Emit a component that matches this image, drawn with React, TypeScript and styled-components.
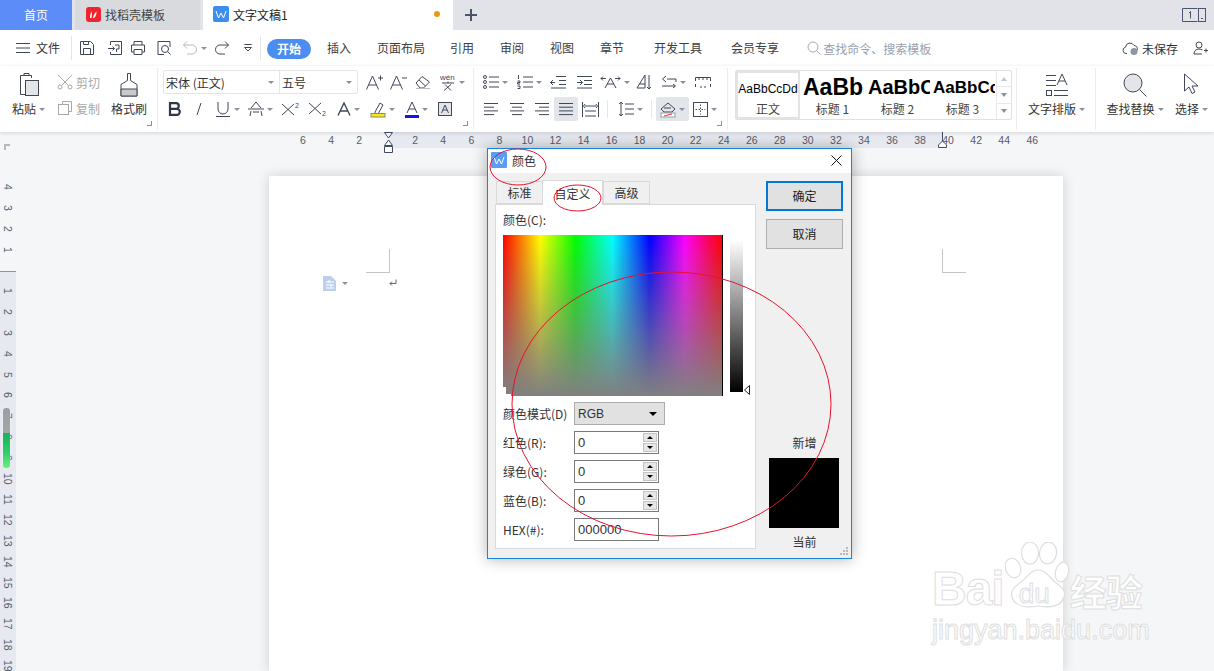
import * as React from 'react';
import styled, { createGlobalStyle } from 'styled-components';

const GlobalStyle = createGlobalStyle`
  html, body { margin: 0; padding: 0; height: 671px; overflow: hidden; background: #f5f6f8; }
  body { font-family: "Noto Sans CJK SC", "Liberation Sans", sans-serif; font-size: 12px; color: #333; }
  * { box-sizing: border-box; }
`;

const Page = styled.div`
  position: relative;
  width: 1214px;
  height: 671px;
  overflow: hidden;
  display: flex;
  flex-direction: column;
`;

/* tab strip */
const TabBar = styled.div`
  height: 30px;
  flex: none;
  background: #e1e3e8;
  display: flex;
  align-items: stretch;
`;
const HomeTab = styled.div`
  width: 72px;
  padding-bottom: 2px;
  background: #5b8cf8;
  color: #fff;
  display: flex;
  align-items: center;
  justify-content: center;
`;
const DocTab = styled.div<{ $w: number; $active?: boolean }>`
  width: ${p => p.$w}px;
  margin-left: 3px;
  padding-left: ${p => (p.$active ? 10 : 11)}px;
  padding-bottom: 2px;
  background: ${p => (p.$active ? '#fff' : '#d9dade')};
  color: ${p => (p.$active ? '#222' : '#444')};
  display: flex;
  align-items: center;
  gap: 4px;
`;
const UnsavedDot = styled.span`
  width: 6px;
  height: 6px;
  border-radius: 50%;
  background: #e89b0c;
  margin-left: auto;
  margin-right: 13px;
`;
const PlusTab = styled.div`
  margin-left: 11px;
  display: flex;
  align-items: center;
`;
const PageCount = styled.div`
  margin-left: auto;
  margin-right: 8px;
  display: flex;
  align-items: center;
`;

/* menu row */
const MenuBar = styled.div`
  height: 36px;
  flex: none;
  background: #fff;
  display: flex;
  align-items: center;
  position: relative;
`;
const FileMenu = styled.div`
  width: 71px;
  padding: 0 0 1px 16px;
  display: flex;
  align-items: center;
  gap: 6px;
  color: #333;
`;
const VRule = styled.div`
  width: 1px;
  height: 24px;
  background: #e4e5e8;
  flex: none;
`;
const QuickBtn = styled.div<{ $w: number }>`
  width: ${p => p.$w}px;
  display: flex;
  align-items: center;
  justify-content: center;
  gap: 3px;
`;
const StartPill = styled.div`
  width: 44px;
  height: 20px;
  margin: 2px 0 0 6px;
  padding-bottom: 1px;
  border-radius: 10px;
  background: #4b8df0;
  color: #fff;
  font-weight: 700;
  display: flex;
  align-items: center;
  justify-content: center;
`;
const MenuItem = styled.div<{ $gap: number }>`
  margin-left: ${p => p.$gap}px;
  padding-bottom: 1px;
  color: #3c3c3c;
  white-space: nowrap;
`;
const SearchHint = styled.div`
  margin-left: 28px;
  display: flex;
  align-items: center;
  gap: 2px;
  color: #99a0ac;
`;
const SaveState = styled.div`
  margin-left: auto;
  margin-right: 6px;
  display: flex;
  align-items: center;
  gap: 3px;
  color: #333;
`;
const SaveGap = styled.span`
  width: 9px;
`;

/* ribbon */
const Ribbon = styled.div`
  height: 66px;
  flex: none;
  background: #fff;
  display: flex;
  box-shadow: 0 1px 4px rgba(0, 0, 0, 0.14);
  position: relative;
  z-index: 2;
`;
const Group = styled.div<{ $w: number; $pad?: number; $line?: boolean }>`
  position: relative;
  width: ${p => p.$w}px;
  height: 62px;
  margin-top: 2px;
  padding-left: ${p => p.$pad || 0}px;
  border-right: ${p => (p.$line === false ? 'none' : '1px solid #ecedf0')};
  flex: none;
  display: flex;
`;
const Launcher = styled.span`
  position: absolute;
  right: 5px;
  bottom: 4px;
  width: 5px;
  height: 5px;
  border-right: 1px solid #8a8f99;
  border-bottom: 1px solid #8a8f99;
`;
const BigTool = styled.div<{ $w: number }>`
  width: ${p => p.$w}px;
  padding-top: 4px;
  display: flex;
  flex-direction: column;
  align-items: center;
  flex: none;
`;
const BigIcon = styled.div`
  height: 26px;
  display: flex;
  align-items: center;
  justify-content: center;
`;
const BigLabel = styled.div`
  margin-top: 2px;
  height: 18px;
  line-height: 18px;
  display: flex;
  align-items: center;
  gap: 3px;
  white-space: nowrap;
  color: #333;
`;
const SmallCol = styled.div`
  width: 53px;
  flex: none;
  padding-top: 5px;
  display: flex;
  flex-direction: column;
  gap: 8px;
`;
const SmallTool = styled.div`
  height: 18px;
  display: flex;
  align-items: center;
  gap: 3px;
  color: #a8a8a8;
`;
const Rows = styled.div`
  display: flex;
  flex-direction: column;
  padding-top: 2px;
  gap: 3px;
`;
const ToolRow = styled.div`
  display: flex;
  align-items: center;
  height: 24px;
`;
const Tool = styled.div<{ $w: number; $on?: boolean }>`
  width: ${p => p.$w}px;
  height: 24px;
  flex: none;
  border-radius: 2px;
  background: ${p => (p.$on ? '#e2e5e9' : 'transparent')};
  display: flex;
  align-items: center;
  justify-content: center;
  gap: 3px;
`;
const Caret = styled.span`
  width: 0;
  height: 0;
  flex: none;
  border-left: 3px solid transparent;
  border-right: 3px solid transparent;
  border-top: 3px solid #8b909a;
`;
const FontBox = styled.div`
  display: flex;
  height: 24px;
  width: 195px;
  margin-right: 4px;
  border: 1px solid #e3e4e7;
  border-radius: 2px;
  flex: none;
`;
const FontField = styled.div<{ $w: number }>`
  width: ${p => p.$w}px;
  padding: 0 5px 0 2px;
  display: flex;
  align-items: center;
  justify-content: space-between;
  color: #333;
  & + & { border-left: 1px solid #e3e4e7; }
`;
const RowRule = styled.div`
  width: 1px;
  height: 18px;
  margin: 0 4px;
  background: #e6e7ea;
  flex: none;
`;
const Gallery = styled.div`
  margin: 2px 0 0 7px;
  width: 277px;
  height: 50px;
  border: 1px solid #e0e1e4;
  border-radius: 2px;
  display: flex;
`;
const StyleCell = styled.div<{ $w: number; $on?: boolean }>`
  width: ${p => p.$w}px;
  height: ${p => (p.$on ? '48px' : '100%')};
  flex: none;
  overflow: hidden;
  border: ${p => (p.$on ? '2px solid #e3e3e6' : 'none')};
  display: flex;
  flex-direction: column;
  align-items: ${p => (p.$on ? 'center' : 'flex-start')};
`;
const StyleSample = styled.div<{ $size: number; $bold?: boolean }>`
  height: 30px;
  padding: 3px 0 0 ${p => (p.$bold ? 3 : 0)}px;
  display: flex;
  align-items: center;
  font-family: "Liberation Sans", sans-serif;
  font-size: ${p => p.$size}px;
  font-weight: ${p => (p.$bold ? 700 : 400)};
  color: #000;
  white-space: nowrap;
`;
const StyleName = styled.div`
  align-self: center;
  height: 16px;
  line-height: 16px;
  color: #444;
  white-space: nowrap;
`;
const GalleryScroll = styled.div`
  margin-left: auto;
  width: 15px;
  border-left: 1px solid #e8e9ec;
  display: flex;
  flex-direction: column;
`;
const ScrollStep = styled.div`
  flex: 1;
  display: flex;
  align-items: center;
  justify-content: center;
  & + & { border-top: 1px solid #e8e9ec; }
`;
const Up = styled.span`
  border-left: 3px solid transparent;
  border-right: 3px solid transparent;
  border-bottom: 4px solid #c3c6cc;
`;
const Down = styled.span`
  border-left: 3px solid transparent;
  border-right: 3px solid transparent;
  border-top: 4px solid #8b909a;
`;

/* rulers + document */
const TopRuler = styled.div`
  height: 16px;
  flex: none;
  padding-left: 289px;
  display: flex;
  position: relative;
  background: linear-gradient(to right, transparent 388px, #e6e9ef 388px, #e6e9ef 943px, transparent 943px);
`;
const RulerNum = styled.div`
  width: 28.05px;
  flex: none;
  text-align: center;
  font-family: "Liberation Sans", sans-serif;
  font-size: 10.5px;
  line-height: 16px;
  color: #555c6b;
`;
const Marker = styled.svg<{ $x: number }>`
  position: absolute;
  left: ${p => p.$x}px;
  top: 0;
`;
const TabStop = styled.span`
  position: absolute;
  left: 4px;
  top: 12px;
  width: 6px;
  height: 6px;
  border-left: 2px solid #b4b8c0;
  border-top: 2px solid #b4b8c0;
`;
const Workspace = styled.div`
  flex: 1;
  display: flex;
  min-height: 0;
  background: #f5f6f8;
`;
const SideRuler = styled.div`
  width: 16px;
  flex: none;
  padding-top: 29px;
  display: flex;
  flex-direction: column;
  background: linear-gradient(to bottom, transparent 123px, #8c93a3 123px, #8c93a3 124px, #e6e9ef 124px);
`;
const SideNum = styled.div`
  height: 20.8px;
  flex: none;
  display: flex;
  align-items: center;
  justify-content: center;
  writing-mode: vertical-rl;
  font-family: "Liberation Sans", sans-serif;
  font-size: 10.5px;
  color: #555c6b;
`;
const Paper = styled.div`
  width: 794px;
  margin: 28px 0 0 253px;
  padding-top: 73px;
  flex: none;
  background: #fff;
  box-shadow: 0 0 12px rgba(0, 0, 0, 0.16);
`;
const CropRow = styled.div`
  display: flex;
  justify-content: space-between;
  padding: 0 97px;
`;
const CropMark = styled.div<{ $side: 'left' | 'right' }>`
  width: 24px;
  height: 24px;
  border-bottom: 1px solid #c4c4c4;
  border-${p => p.$side}: 1px solid #c4c4c4;
`;
const ParaRow = styled.div`
  margin-top: 1px;
  padding-left: 54px;
  height: 18px;
  display: flex;
  align-items: center;
  gap: 5px;
`;
const ParaMark = styled.span`
  margin-left: 36px;
  display: flex;
`;

/* color dialog */
const Dialog = styled.div`
  position: absolute;
  left: 487px;
  top: 148px;
  width: 365px;
  height: 411px;
  background: #f0f0f0;
  border: 1px solid #1883d7;
  box-shadow: 0 0 14px rgba(0, 0, 0, 0.3);
  display: flex;
  flex-direction: column;
  z-index: 5;
`;
const TitleBar = styled.div`
  height: 24px;
  flex: none;
  background: #fff;
  padding: 0 9px 2px 3px;
  display: flex;
  align-items: center;
  gap: 5px;
  color: #333;
`;
const CloseBtn = styled.div`
  margin-left: auto;
  display: flex;
`;
const DialogBody = styled.div`
  flex: 1;
  padding: 6px 8px 8px 7px;
  display: flex;
`;
const LeftCol = styled.div`
  width: 261px;
  flex: none;
  display: flex;
  flex-direction: column;
`;
const TabStrip = styled.div`
  height: 25px;
  flex: none;
  display: flex;
  align-items: flex-end;
  padding-left: 1px;
  position: relative;
  z-index: 1;
`;
const DlgTab = styled.div<{ $w: number; $on?: boolean }>`
  width: ${p => p.$w}px;
  height: ${p => (p.$on ? 25 : 23)}px;
  margin-bottom: ${p => (p.$on ? -1 : 0)}px;
  background: ${p => (p.$on ? '#fff' : '#f0f0f0')};
  border: 1px solid #d9d9d9;
  border-bottom: ${p => (p.$on ? 'none' : '1px solid #d9d9d9')};
  margin-right: ${p => (p.$on ? 0 : -1)}px;
  display: flex;
  align-items: center;
  justify-content: center;
  color: #333;
`;
const Pane = styled.div`
  width: 261px;
  height: 345px;
  background: #fff;
  border: 1px solid #d9d9d9;
  padding: 7px 7px 0;
`;
const PaneLabel = styled.div`
  height: 16px;
  line-height: 16px;
`;
const PickerRow = styled.div`
  margin-top: 7px;
  height: 161px;
  display: flex;
`;
const Spectrum = styled.div`
  position: relative;
  width: 220px;
  height: 161px;
  flex: none;
  border-right: 1px solid #000;
  background:
    linear-gradient(to bottom, rgba(128, 128, 128, 0), rgb(128, 128, 128)),
    linear-gradient(to right, #f00, #ff0 17%, #0f0 33%, #0ff 50%, #00f 67%, #f0f 83%, #f00);
`;
const SpectrumCursor = styled.span`
  position: absolute;
  left: 0;
  bottom: 0;
  width: 8px;
  height: 9px;
  background: linear-gradient(to right, #fff 3px, transparent 3px), linear-gradient(to top, #fff 2px, transparent 2px);
`;
const LumaBar = styled.div`
  margin: 5px 0 0 7px;
  width: 13px;
  height: 152px;
  flex: none;
  background: linear-gradient(to bottom, #fff, #000);
`;
const LumaArrow = styled.svg`
  margin-top: 150px;
  margin-left: 1px;
  flex: none;
`;
const FormGrid = styled.div`
  margin-top: 6px;
  display: grid;
  grid-template-columns: 71px 1fr;
  grid-auto-rows: 23px;
  row-gap: 6px;
  align-items: center;
`;
const ModeSelect = styled.div`
  width: 91px;
  height: 23px;
  background: #e1e1e1;
  border: 1px solid #adadad;
  padding: 0 7px 0 3px;
  display: flex;
  align-items: center;
  justify-content: space-between;
  font-family: "Liberation Sans", sans-serif;
`;
const BlackCaret = styled.span`
  border-left: 4px solid transparent;
  border-right: 4px solid transparent;
  border-top: 4px solid #000;
`;
const NumField = styled.div<{ $w: number }>`
  width: ${p => p.$w}px;
  height: 23px;
  background: #fff;
  border: 1px solid #7a7a7a;
  padding: 1px 1px 1px 3px;
  display: flex;
  align-items: center;
  justify-content: space-between;
  font-family: "Liberation Sans", sans-serif;
  font-size: 13px;
`;
const Spinner = styled.div`
  width: 14px;
  height: 19px;
  display: flex;
  flex-direction: column;
  gap: 1px;
`;
const SpinPart = styled.div`
  flex: 1;
  background: #e6e6e6;
  border: 1px solid #c4c4c4;
  display: flex;
  align-items: center;
  justify-content: center;
`;
const SpinUp = styled.span`
  border-left: 3px solid transparent;
  border-right: 3px solid transparent;
  border-bottom: 3px solid #000;
`;
const SpinDown = styled.span`
  border-left: 3px solid transparent;
  border-right: 3px solid transparent;
  border-top: 3px solid #000;
`;
const RightCol = styled.div`
  width: 77px;
  margin: 2px 0 0 10px;
  flex: none;
  display: flex;
  flex-direction: column;
  align-items: center;
`;
const DlgButton = styled.div<{ $primary?: boolean }>`
  width: 77px;
  height: 30px;
  flex: none;
  padding-bottom: 2px;
  background: #e1e1e1;
  border: ${p => (p.$primary ? '2px solid #0078d7' : '1px solid #adadad')};
  display: flex;
  align-items: center;
  justify-content: center;
  margin-bottom: 8px;
  color: #222;
`;
const SwatchLabel = styled.div<{ $top?: boolean }>`
  height: 16px;
  line-height: 16px;
  margin-top: ${p => (p.$top ? 'auto' : '6px')};
  margin-bottom: ${p => (p.$top ? '7px' : '0')};
`;
const Swatch = styled.div`
  width: 70px;
  height: 70px;
  margin-right: 1px;
  background: #000;
`;
const Grip = styled.svg`
  position: absolute;
  right: 2px;
  bottom: 2px;
`;

/* overlays */
const Scribbles = styled.svg`
  position: absolute;
  left: 0;
  top: 0;
  z-index: 6;
  pointer-events: none;
`;
const ScrollThumb = styled.div`
  position: absolute;
  left: 3px;
  top: 408px;
  width: 7px;
  height: 60px;
  border-radius: 3px;
  box-shadow: 0 0 2px rgba(255, 255, 255, 0.9);
  background: linear-gradient(to bottom, #9c9ea3 0, #a4a6aa 25px, #17b35c 25px, #2fcf6c 45px, #6df07f 60px);
`;
const Watermark = styled.div`
  position: absolute;
  left: 932px;
  top: 542px;
  width: 220px;
  z-index: 3;
  pointer-events: none;
  display: flex;
  flex-direction: column;
`;
const BrandRow = styled.div`
  display: flex;
  align-items: flex-end;
  height: 68px;
`;
const OutlineText = styled.span<{ $size: number; $bold?: boolean; $tight?: boolean }>`
  font-family: "Liberation Sans", "Noto Sans CJK SC", sans-serif;
  font-size: ${p => p.$size}px;
  font-weight: ${p => (p.$bold ? 700 : 400)};
  line-height: ${p => (p.$tight ? 0.85 : 1)};
  letter-spacing: ${p => (p.$tight ? -1 : 0)}px;
  color: #fff;
  -webkit-text-stroke: 1px #dedede;
  white-space: nowrap;
`;
const PawBox = styled.div`
  position: relative;
  width: 65px;
  height: 68px;
  margin-left: 1px;
  flex: none;
`;
const PawText = styled.div`
  position: absolute;
  left: 14px;
  top: 38px;
`;
const SiteLine = styled.div`
  margin-top: 7px;
`;

const stroke = '#404756';

const Svg = ({ w = 16, h = 16, c = stroke, sw = 1, children }: { w?: number; h?: number; c?: string; sw?: number; children: React.ReactNode }) => (
  <svg width={w} height={h} viewBox={`0 0 ${w} ${h}`} fill="none" stroke={c} strokeWidth={sw} style={{ flex: 'none', display: 'block' }}>
    {children}
  </svg>
);

const rulerNums = ['6', '4', '2', '', '2', '4', '6', '8', '10', '12', '14', '16', '18', '20', '22', '24', '26', '28', '30', '32', '34', '36', '38', '40', '42', '44', '46'];
const sideTop = ['4', '3', '2', '1', ''];
const sideBottom = ['1', '2', '3', '4', '5', '6', '7', '8', '9', '10', '11', '12', '13', '14', '15', '16', '17', '18', '19'];

const Lines = ({ rows }: { rows: [number, number][] }) => (
  <Svg w={16} h={16}>
    {rows.map(([a, b], i) => (
      <path key={i} d={`M${a} ${2.5 + i * 3.7}H${b}`} />
    ))}
  </Svg>
);

const SpinField = ({ value }: { value: string }) => (
  <NumField $w={85}>
    {value}
    <Spinner>
      <SpinPart><SpinUp /></SpinPart>
      <SpinPart><SpinDown /></SpinPart>
    </Spinner>
  </NumField>
);

export default function App() {
  return (
    <Page>
      <GlobalStyle />
      <TabBar>
        <HomeTab>首页</HomeTab>
        <DocTab $w={125}>
          <svg width="15" height="15" viewBox="0 0 15 15" style={{ flex: 'none' }}>
            <rect width="15" height="15" rx="3" fill="#f0242f" />
            <path d="M4 11c0-3 .5-5 1.500-6.500C6 7 6 9 5.500 11zM7 11.500c0-3 1.500-5 3.500-7C10.500 8 9.500 10.500 7 11.500z" fill="#fff" />
          </svg>
          找稻壳模板
        </DocTab>
        <DocTab $w={250} $active>
          <svg width="16" height="16" viewBox="0 0 16 16" style={{ flex: 'none' }}>
            <rect width="16" height="16" rx="2" fill="#3d8cf0" />
            <path d="M3 5l2.500 7L8 7l2.500 5L13 5" fill="none" stroke="#fff" strokeWidth="1" />
          </svg>
          文字文稿1
          <UnsavedDot />
        </DocTab>
        <PlusTab>
          <Svg w={14} h={14} c="#4a5568" sw={2}><path d="M7 1v12M1 7h12" /></Svg>
        </PlusTab>
        <PageCount>
          <svg width="24" height="14" viewBox="0 0 24 14" fill="none" stroke="#4a5570">
            <path d="M15.500 .5H.5v13h15" />
            <rect x="16.500" y=".5" width="7" height="13" />
            <path d="M8.500 3.500v7M7 5l1.500-1.500M19 10.500h2" />
          </svg>
        </PageCount>
      </TabBar>

      <MenuBar>
        <FileMenu>
          <Svg w={14} h={12}><path d="M0 1.500h14M0 6h14M0 10.500h14" /></Svg>
          文件
        </FileMenu>
        <VRule />
        <QuickBtn $w={30}>
          <Svg><path d="M1.500 1.500h10l3 3v10h-13zM4.500 14.500v-6h7v6M4.500 1.500v3h5v-3" /></Svg>
        </QuickBtn>
        <QuickBtn $w={26}>
          <Svg><path d="M3.500 5V1.500h11v13h-11V12M1 8.500h6.500M5.500 6.500l2 2-2 2M8 5h4v4H9.500v3" /></Svg>
        </QuickBtn>
        <QuickBtn $w={20}>
          <Svg><path d="M4 5V1.500h8V5M4 12H1.500V5h13v7H12M4 9.500h8v5H4z" /></Svg>
        </QuickBtn>
        <QuickBtn $w={32}>
          <Svg><path d="M14 7V1.500H2v13h6" /><circle cx="9" cy="9" r="3.500" /><path d="M11.500 11.500l3 3" /></Svg>
        </QuickBtn>
        <QuickBtn $w={28}>
          <Svg c="#b5b8be"><path d="M5 1.500L1.500 5 5 8.500M1.500 5H10a4 4 0 010 9H5" /></Svg>
          <Caret />
        </QuickBtn>
        <QuickBtn $w={28}>
          <Svg><path d="M11 1.500L14.500 5 11 8.500M14.500 5H6a4 4 0 000 9h5" /></Svg>
        </QuickBtn>
        <QuickBtn $w={24}>
          <Svg w={10} h={10}><path d="M1.500 1.500h7M1.500 4.500l3.500 3.500 3.500-3.500z" /></Svg>
        </QuickBtn>
        <VRule />
        <StartPill>开始</StartPill>
        <MenuItem $gap={16}>插入</MenuItem>
        <MenuItem $gap={26}>页面布局</MenuItem>
        <MenuItem $gap={25}>引用</MenuItem>
        <MenuItem $gap={26}>审阅</MenuItem>
        <MenuItem $gap={26}>视图</MenuItem>
        <MenuItem $gap={26}>章节</MenuItem>
        <MenuItem $gap={30}>开发工具</MenuItem>
        <MenuItem $gap={29}>会员专享</MenuItem>
        <SearchHint>
          <Svg w={14} h={14} c="#a6abb5"><circle cx="6" cy="6" r="5" /><path d="M9.500 9.500l4 4" /></Svg>
          查找命令、搜索模板
        </SearchHint>
        <SaveState>
          <Svg w={17} h={14}>
            <path d="M5 12.500H4a3.200 3.200 0 01-.5-6.300A4.500 4.500 0 0112 4.500a3.500 3.500 0 013 5" />
            <circle cx="12" cy="10.500" r="3.500" fill="#8f96a3" stroke="none" />
          </Svg>
          未保存
          <SaveGap />
          <Svg w={15} h={14}><circle cx="6" cy="4" r="3" /><path d="M1 13c0-3 2-5 5-5 1.500 0 2.500.5 3.500 1M1 13h8M11 9.500h4M13 7.500v4" /></Svg>
        </SaveState>
      </MenuBar>

      <Ribbon>
        <Group $w={158}>
          <BigTool $w={57}>
            <BigIcon>
              <svg width="22" height="26" viewBox="0 0 22 26" fill="none" stroke={stroke}>
                <path d="M13.500 6V3.500h-11v19H7M6 3.500V1.500h5v2" />
                <rect x="7.500" y="8.500" width="13" height="15" fill="#e4e5e8" />
              </svg>
            </BigIcon>
            <BigLabel>粘贴<Caret /></BigLabel>
          </BigTool>
          <SmallCol>
            <SmallTool>
              <Svg c="#a8a8a8"><circle cx="3" cy="13" r="2" /><circle cx="13" cy="13" r="2" /><path d="M1 1l10.500 10.500M15 1L4.500 11.500" /></Svg>
              剪切
            </SmallTool>
            <SmallTool>
              <Svg c="#a8a8a8"><path d="M5.500 4V1.500h9v10H12" /><rect x="1.500" y="4.500" width="10" height="10" /></Svg>
              复制
            </SmallTool>
          </SmallCol>
          <BigTool $w={38}>
            <BigIcon>
              <svg width="18" height="26" viewBox="0 0 18 26" fill="none" stroke={stroke}>
                <path d="M7.500 1.500h3v7l6.500 4v11.500H1V12.500l6.500-4z" />
                <path d="M1 17h16v7H1z" fill="#c7c9cd" />
              </svg>
            </BigIcon>
            <BigLabel>格式刷</BigLabel>
          </BigTool>
          <Launcher />
        </Group>

        <Group $w={316} $pad={5}>
          <Rows>
            <ToolRow>
              <FontBox>
                <FontField $w={115}>宋体 (正文)<Caret /></FontField>
                <FontField $w={78}>五号<Caret /></FontField>
              </FontBox>
              <Tool $w={24}>
                <Svg w={17} h={16}><path d="M.5 15.500L6.500 2l6 13.500M2.500 11h8M12 4h5M14.500 1.500v5" /></Svg>
              </Tool>
              <Tool $w={24}>
                <Svg w={17} h={16}><path d="M.5 15.500L6.500 2l6 13.500M2.500 11h8M12 4h5" /></Svg>
              </Tool>
              <Tool $w={26}>
                <Svg w={16} h={14}><path d="M1 8l6-6.500L14.500 7 8.500 13H5zM4 5l6.500 6" /><path d="M1 13.500h14" stroke="#bbb" /></Svg>
              </Tool>
              <Tool $w={32}>
                <svg width="16" height="18" viewBox="0 0 16 18" fill="none" stroke={stroke}>
                  <text x="0" y="7" fontSize="8" fill={stroke} stroke="none" fontFamily="Liberation Sans">wén</text>
                  <path d="M2 10h12M8 8.500V10M5 11.500l6 6M11 11.500l-7 6" />
                </svg>
                <Caret />
              </Tool>
            </ToolRow>
            <ToolRow>
              <Tool $w={24}>
                <Svg w={14} h={14} sw={2.200} c="#2f3645"><path d="M2 1.200h6a2.800 2.800 0 010 5.600H2zM2 6.800h6.800a3 3 0 010 6H2zM2 0v14" /></Svg>
              </Tool>
              <Tool $w={24}>
                <Svg w={10} h={14}><path d="M7 1L3 13" /></Svg>
              </Tool>
              <Tool $w={32}>
                <Svg w={16} h={16}><path d="M3 1v7a5 5 0 0010 0V1M1 15.500h14" /></Svg>
                <Caret />
              </Tool>
              <Tool $w={34}>
                <Svg w={16} h={16}><path d="M3 7l5-6 5 6M0 8h16M3 10l-1 5M13 10l1 5M5 11h6" /></Svg>
                <Caret />
              </Tool>
              <Tool $w={28}>
                <Svg w={20} h={14}><path d="M1 2l12 11M13 2L1 13" /><text x="14" y="6" fontSize="7" fill={stroke} stroke="none" fontFamily="Liberation Sans">2</text></Svg>
              </Tool>
              <Tool $w={26}>
                <Svg w={20} h={14}><path d="M1 1l12 11M13 1L1 12" /><text x="14" y="14" fontSize="7" fill={stroke} stroke="none" fontFamily="Liberation Sans">2</text></Svg>
              </Tool>
              <Tool $w={34}>
                <Svg w={14} h={14} sw={1.400}><path d="M1 13.500L7 1l6 12.500M3.500 9h7" /></Svg>
                <Caret />
              </Tool>
              <Tool $w={34}>
                <svg width="16" height="17" viewBox="0 0 16 17" fill="none" stroke={stroke}>
                  <path d="M5 11l5-9 3 2-5 9H5z" />
                  <rect x="1" y="12.500" width="14" height="3.500" fill="#f8e71c" stroke="#8a8a60" />
                </svg>
                <Caret />
              </Tool>
              <Tool $w={34}>
                <svg width="14" height="17" viewBox="0 0 14 17" fill="none" stroke={stroke}>
                  <path d="M2 12L7 1l5 11M4 8h6" />
                  <rect y="14" width="14" height="3" fill="#1414e6" stroke="none" />
                </svg>
                <Caret />
              </Tool>
              <Tool $w={24}>
                <Svg w={14} h={14}><rect x=".5" y=".5" width="13" height="13" fill="#e4e5e8" /><path d="M3.500 11L7 3l3.500 8M5 8h4" /></Svg>
              </Tool>
            </ToolRow>
          </Rows>
          <Launcher />
        </Group>

        <Group $w={254} $pad={3}>
          <Rows>
            <ToolRow>
              <Tool $w={36}>
                <Svg w={16} h={14}><circle cx="2" cy="2" r="1.500" /><circle cx="2" cy="7" r="1.500" /><circle cx="2" cy="12" r="1.500" /><path d="M6 2h10M6 7h10M6 12h10" /></Svg>
                <Caret />
              </Tool>
              <Tool $w={32}>
                <Svg w={16} h={14}><path d="M1.500 0v4M.5 6h2.500v1.500H.5V9h2.500M.5 11H3v2.500H.5M6 2h10M6 7h10M6 12h10" /></Svg>
                <Caret />
              </Tool>
              <Tool $w={26}>
                <Svg w={16} h={14}><path d="M6 1.500h10M9 5.500h7M9 9.500h7M1 13h15M5 7.500H.5M3 5L.5 7.500 3 10" /></Svg>
              </Tool>
              <Tool $w={26}>
                <Svg w={16} h={14}><path d="M1 1.500h15M8 5.500h8M8 9.500h8M1 13h15M1 7.500h5.500M4 5l2.500 2.500L4 10" /></Svg>
              </Tool>
              <Tool $w={36}>
                <Svg w={21} h={14}><path d="M1 3.500h5M3 1.500L1 3.500l2 2M15 3.500h5M18 1.500l2 2-2 2M5 13l5.500-10L16 13M7 9h7" /></Svg>
                <Caret />
              </Tool>
              <Tool $w={22}>
                <Svg w={16} h={16}><path d="M1 14h8V1L1 14zM3 10h6M13 1v14M11 13l2 2 2-2" /></Svg>
              </Tool>
              <Tool $w={36}>
                <Svg w={16} h={16}><path d="M6 5h9v3M1.500 5L5 2M1.500 5L5 8M1 12h13M12 10l2.500 2L12 14" /></Svg>
                <Caret />
              </Tool>
              <Tool $w={24}>
                <Svg w={16} h={12}><path d="M.5 5V1.500h15V5M4 1.500V4M8 1.500V4M12 1.500V4M.5 8v3M15.500 8v3M5 11h2M9 11h2" /></Svg>
              </Tool>
            </ToolRow>
            <ToolRow>
              <Tool $w={27}><Lines rows={[[1, 15], [1, 11], [1, 15], [1, 11]]} /></Tool>
              <Tool $w={25}><Lines rows={[[1, 15], [3, 13], [1, 15], [3, 13]]} /></Tool>
              <Tool $w={25}><Lines rows={[[1, 15], [5, 15], [1, 15], [5, 15]]} /></Tool>
              <Tool $w={24} $on><Lines rows={[[1, 15], [1, 15], [1, 15], [1, 15]]} /></Tool>
              <Tool $w={25}>
                <Svg w={17} h={15}><path d="M.5 0v15M16.500 0v15M3 4h11M3 2l-1.500 2L3 6M14 2l1.500 2L14 6M3 9h11M3 14h11" /></Svg>
              </Tool>
              <RowRule />
              <Tool $w={35}>
                <Svg w={17} h={16}><path d="M4 1v14M2 3l2-2 2 2M2 13l2 2 2-2M8 3h9M8 8h9M8 13h9" /></Svg>
                <Caret />
              </Tool>
              <RowRule />
              <Tool $w={33} $on>
                <svg width="16" height="17" viewBox="0 0 16 17" fill="none" stroke={stroke}>
                  <path d="M1 8l7-6 7 6-3 3H4zM4 7h7" />
                  <rect x="1" y="12" width="14" height="4" fill="#fff" stroke="#9a9ea6" />
                  <path d="M4 15l8-2" stroke="#e53935" />
                </svg>
                <Caret />
              </Tool>
              <Tool $w={32}>
                <Svg w={15} h={15}><rect x=".5" y=".5" width="14" height="14" /><path d="M7.500 2.500v10M2.500 7.500h10" strokeDasharray="1.500 1.500" /></Svg>
                <Caret />
              </Tool>
            </ToolRow>
          </Rows>
          <Launcher />
        </Group>

        <Group $w={289}>
          <Gallery>
            <StyleCell $w={64} $on>
              <StyleSample $size={12}>AaBbCcDd</StyleSample>
              <StyleName>正文</StyleName>
            </StyleCell>
            <StyleCell $w={65}>
              <StyleSample $size={23} $bold>AaBb</StyleSample>
              <StyleName>标题 1</StyleName>
            </StyleCell>
            <StyleCell $w={65}>
              <StyleSample $size={20} $bold>AaBbCc</StyleSample>
              <StyleName>标题 2</StyleName>
            </StyleCell>
            <StyleCell $w={65}>
              <StyleSample $size={17} $bold>AaBbCc</StyleSample>
              <StyleName>标题 3</StyleName>
            </StyleCell>
            <GalleryScroll>
              <ScrollStep><Up /></ScrollStep>
              <ScrollStep><Down /></ScrollStep>
              <ScrollStep><Down /></ScrollStep>
            </GalleryScroll>
          </Gallery>
        </Group>

        <Group $w={79}>
          <BigTool $w={79}>
            <BigIcon>
              <Svg w={24} h={24}><path d="M1 2.500h10M1 7.500h10M1 12.500h10M12 12L17 1l5 11M14 8h6M9 17.500h14M9 22.500h14" /><rect x="1.500" y="17.500" width="5" height="5" /></Svg>
            </BigIcon>
            <BigLabel>文字排版<Caret /></BigLabel>
          </BigTool>
        </Group>

        <Group $w={78} $line={false}>
          <BigTool $w={78}>
            <BigIcon>
              <Svg w={24} h={24}><circle cx="10" cy="10" r="9" fill="#e4e5e8" /><path d="M16.500 16.500l7 7" /></Svg>
            </BigIcon>
            <BigLabel>查找替换<Caret /></BigLabel>
          </BigTool>
        </Group>
        <Group $w={40} $line={false}>
          <BigTool $w={35}>
            <BigIcon>
              <Svg w={18} h={24}><path d="M1.500 1v17l4.500-4 3 6.500 3-1.500-3-6h6z" /></Svg>
            </BigIcon>
            <BigLabel>选择<Caret /></BigLabel>
          </BigTool>
        </Group>
      </Ribbon>

      <TopRuler>
        <TabStop />
        {rulerNums.map((n, i) => (
          <RulerNum key={i}>{n}</RulerNum>
        ))}
        <Marker $x={384} width="10" height="22" viewBox="0 0 10 22" fill="#fff" stroke="#3f4a63">
          <path d="M.5 .5h8L4.500 6zM4.500 8L.5 13.500h8zM.5 14.500h8v6h-8z" />
        </Marker>
        <Marker $x={938} width="10" height="16" viewBox="0 0 10 16" fill="#fff" stroke="#3f4a63">
          <path d="M4.500 0v9M4.500 9L.5 13v2.500h8V13z" />
        </Marker>
      </TopRuler>

      <Workspace>
        <SideRuler>
          {sideTop.map((n, i) => (
            <SideNum key={i}>{n}</SideNum>
          ))}
          {sideBottom.map((n, i) => (
            <SideNum key={i}>{n}</SideNum>
          ))}
        </SideRuler>
        <Paper>
          <CropRow>
            <CropMark $side="right" />
            <CropMark $side="left" />
          </CropRow>
          <ParaRow>
            <svg width="14" height="15" viewBox="0 0 14 15">
              <path d="M0 0h8l5 5v10H0z" fill="#bcd0ee" />
              <path d="M3 6h8M3 9h8M3 12h8M6 4v3M8 8v3" stroke="#fff" fill="none" />
            </svg>
            <Caret />
            <ParaMark>
              <Svg w={8} h={8} c="#666"><path d="M7 .5v4H1M3 2.500l-2 2 2 2" /></Svg>
            </ParaMark>
          </ParaRow>
        </Paper>
      </Workspace>

      <ScrollThumb />

      <Watermark>
        <BrandRow>
          <OutlineText $size={48} $bold $tight>Bai</OutlineText>
          <PawBox>
            <svg width="65" height="68" viewBox="0 0 65 68" fill="#fff" stroke="#dedede" strokeWidth="1.200">
              <ellipse cx="8" cy="26" rx="7.500" ry="10" transform="rotate(-20 8 26)" />
              <ellipse cx="25" cy="11" rx="8.500" ry="11" />
              <ellipse cx="43" cy="11" rx="8.500" ry="11" transform="rotate(8 43 11)" />
              <ellipse cx="57" cy="30" rx="6.500" ry="10" transform="rotate(15 57 30)" />
              <path d="M33 28c8 0 11 7 17 12 7 5 11 9 9 15-3 10-14 11-26 9-11 2-23 1-26-9-2-6 2-10 9-15 7-5 9-12 17-12z" />
            </svg>
            <PawText><OutlineText $size={28}>du</OutlineText></PawText>
          </PawBox>
          <OutlineText $size={37} $bold $tight>经验</OutlineText>
        </BrandRow>
        <SiteLine><OutlineText $size={27}>jingyan.baidu.com</OutlineText></SiteLine>
      </Watermark>

      <Dialog>
        <TitleBar>
          <svg width="16" height="16" viewBox="0 0 16 16" style={{ flex: 'none' }}>
            <rect width="16" height="16" rx="1" fill="#5b9df5" />
            <path d="M3 5l2.500 7L8 7l2.500 5L13 5" fill="none" stroke="#fff" />
          </svg>
          颜色
          <CloseBtn>
            <Svg w={11} h={11} c="#111"><path d="M.5 .5l10 10M10.500 .5l-10 10" /></Svg>
          </CloseBtn>
        </TitleBar>
        <DialogBody>
          <LeftCol>
            <TabStrip>
              <DlgTab $w={47}>标准</DlgTab>
              <DlgTab $w={61} $on>自定义</DlgTab>
              <DlgTab $w={47}>高级</DlgTab>
            </TabStrip>
            <Pane>
              <PaneLabel>颜色(C):</PaneLabel>
              <PickerRow>
                <Spectrum><SpectrumCursor /></Spectrum>
                <LumaBar />
                <LumaArrow width="6" height="10" viewBox="0 0 6 10" fill="#fff" stroke="#222">
                  <path d="M5.500 .5L.5 5l5 4.500z" />
                </LumaArrow>
              </PickerRow>
              <FormGrid>
                <span>颜色模式(D)</span>
                <ModeSelect>RGB<BlackCaret /></ModeSelect>
                <span>红色(R):</span>
                <SpinField value="0" />
                <span>绿色(G):</span>
                <SpinField value="0" />
                <span>蓝色(B):</span>
                <SpinField value="0" />
                <span>HEX(#):</span>
                <NumField $w={85}>000000</NumField>
              </FormGrid>
            </Pane>
          </LeftCol>
          <RightCol>
            <DlgButton $primary>确定</DlgButton>
            <DlgButton>取消</DlgButton>
            <SwatchLabel $top>新增</SwatchLabel>
            <Swatch />
            <SwatchLabel>当前</SwatchLabel>
          </RightCol>
        </DialogBody>
        <Grip width="10" height="10" viewBox="0 0 10 10" fill="#b8b8b8">
          <rect x="7" y="1" width="2" height="2" />
          <rect x="4" y="4" width="2" height="2" />
          <rect x="7" y="4" width="2" height="2" />
          <rect x="1" y="7" width="2" height="2" />
          <rect x="4" y="7" width="2" height="2" />
          <rect x="7" y="7" width="2" height="2" />
        </Grip>
      </Dialog>

      <Scribbles width="1214" height="671" viewBox="0 0 1214 671" fill="none" stroke="#e8112d" strokeWidth="1">
        <ellipse cx="518" cy="167" rx="28" ry="18" />
        <ellipse cx="577.500" cy="198" rx="23.500" ry="13" />
        <ellipse cx="671.500" cy="404" rx="159.500" ry="132" />
      </Scribbles>
    </Page>
  );
}
